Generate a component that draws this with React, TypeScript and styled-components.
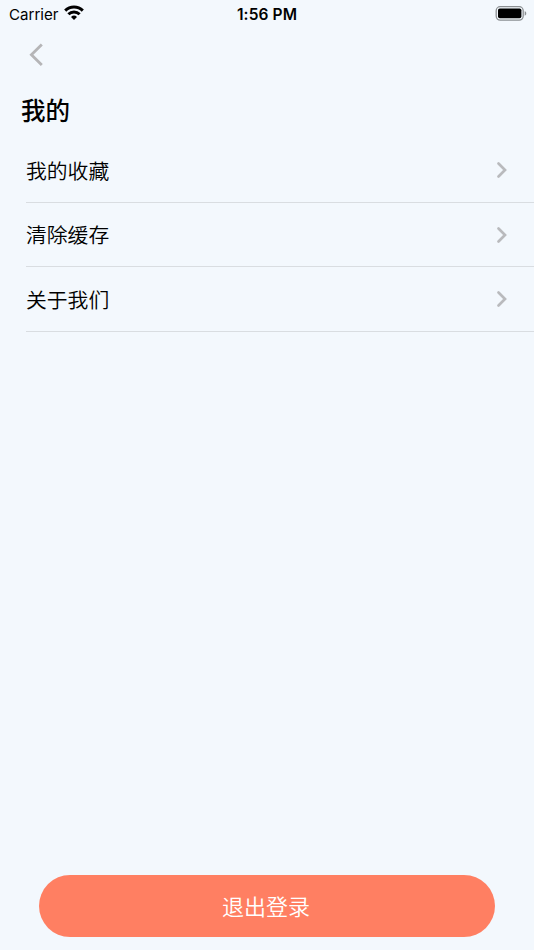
import React from 'react';
import styled, { createGlobalStyle } from 'styled-components';

const GlobalStyle = createGlobalStyle`
  *, *::before, *::after { box-sizing: border-box; }
  body { margin: 0; background: #f3f8fd; }
`;

const Screen = styled.main`
  display: flex;
  flex-direction: column;
  width: 100%;
  height: 100vh;
  overflow: hidden;
  background: #f3f8fd;
  color: #000;
  font-family: Inter, "Noto Sans CJK SC", sans-serif;
`;

const StatusBar = styled.header`
  display: grid;
  grid-template-columns: 1fr auto 1fr;
  align-items: center;
  flex: none;
  height: 28px;
  padding: 0 7px 0 9px;
`;

const Carrier = styled.div`
  display: flex;
  align-items: flex-start;
  gap: 6px;
  height: 28px;
  font-size: 15.1px;
  line-height: 29px;
  svg { margin-top: 5px; }
`;

const Clock = styled.time`
  height: 28px;
  margin-left: -2px;
  font-size: 15.5px;
  font-weight: 600;
  letter-spacing: 0.12px;
  line-height: 30px;
`;

const BatteryIcon = styled.svg`
  justify-self: end;
  margin-bottom: 1px;
`;

const NavBar = styled.nav`
  display: flex;
  align-items: center;
  flex: none;
  height: 54px;
  padding-left: 29px;
`;

const BackButton = styled.button`
  display: flex;
  padding: 0;
  border: 0;
  background: none;
`;

const Title = styled.h1`
  flex: none;
  height: 56px;
  margin: 0;
  padding-left: 21px;
  font-size: 24.5px;
  font-weight: 500;
  line-height: 58px;
`;

const Menu = styled.ul`
  flex: 1;
  margin: 0;
  padding: 0 0 0 26px;
  list-style: none;
`;

const MenuItem = styled.li`
  display: flex;
  align-items: center;
  justify-content: space-between;
  height: 64.5px;
  padding-right: 26px;
  border-bottom: 1px solid #d9dde1;
  font-size: 20.8px;
  font-weight: 350;
  svg { margin-top: 1px; }
`;

const Footer = styled.footer`
  flex: none;
  padding: 0 39px 13px;
`;

const LogoutButton = styled.button`
  display: block;
  width: 100%;
  height: 62px;
  padding: 0 2px 0 0;
  border: 0;
  border-radius: 31px;
  background: #ff7f62;
  color: #fff;
  font-family: inherit;
  font-size: 22px;
  font-weight: 350;
  line-height: 64px;
`;

const items = ['我的收藏', '清除缓存', '关于我们'];

export default function App() {
  return (
    <>
      <GlobalStyle />
      <Screen>
        <StatusBar>
          <Carrier>
            <span>Carrier</span>
            <svg width="20" height="15" viewBox="0 0 20 15" fill="none" stroke="#000" strokeWidth="3">
              <path d="M1.2 5.6A12.6 12.6 0 0 1 18.8 5.6" />
              <path d="M4.4 9.3A8 8 0 0 1 15.6 9.3" />
              <path d="M10 15L7 12A4.3 4.3 0 0 1 13 12Z" fill="#000" stroke="none" />
            </svg>
          </Carrier>
          <Clock>1:56 PM</Clock>
          <BatteryIcon width="32" height="15" viewBox="0 0 32 15">
            <rect x="1.2" y="0.7" width="27" height="13.4" rx="4" fill="none" stroke="#8b8f92" strokeWidth="1.3" />
            <rect x="3" y="2.5" width="23.4" height="9.8" rx="1.8" />
            <path d="M29.7 5.3C31.8 5.8 31.8 9.2 29.7 9.7Z" fill="#8b8f92" />
          </BatteryIcon>
        </StatusBar>
        <NavBar>
          <BackButton aria-label="返回">
            <svg width="14" height="24" viewBox="0 0 14 24" fill="none" stroke="#b5b5b7" strokeWidth="2.8">
              <path d="M12.8 1.4L2.4 11.7L12.8 22" />
            </svg>
          </BackButton>
        </NavBar>
        <Title>我的</Title>
        <Menu>
          {items.map((label) => (
            <MenuItem key={label}>
              <span>{label}</span>
              <svg width="12" height="18" viewBox="0 0 12 18" fill="none" stroke="#b9babd" strokeWidth="2.7" strokeLinecap="round">
                <path d="M2.5 2.5L9 9L2.5 15.5" />
              </svg>
            </MenuItem>
          ))}
        </Menu>
        <Footer>
          <LogoutButton>退出登录</LogoutButton>
        </Footer>
      </Screen>
    </>
  );
}
